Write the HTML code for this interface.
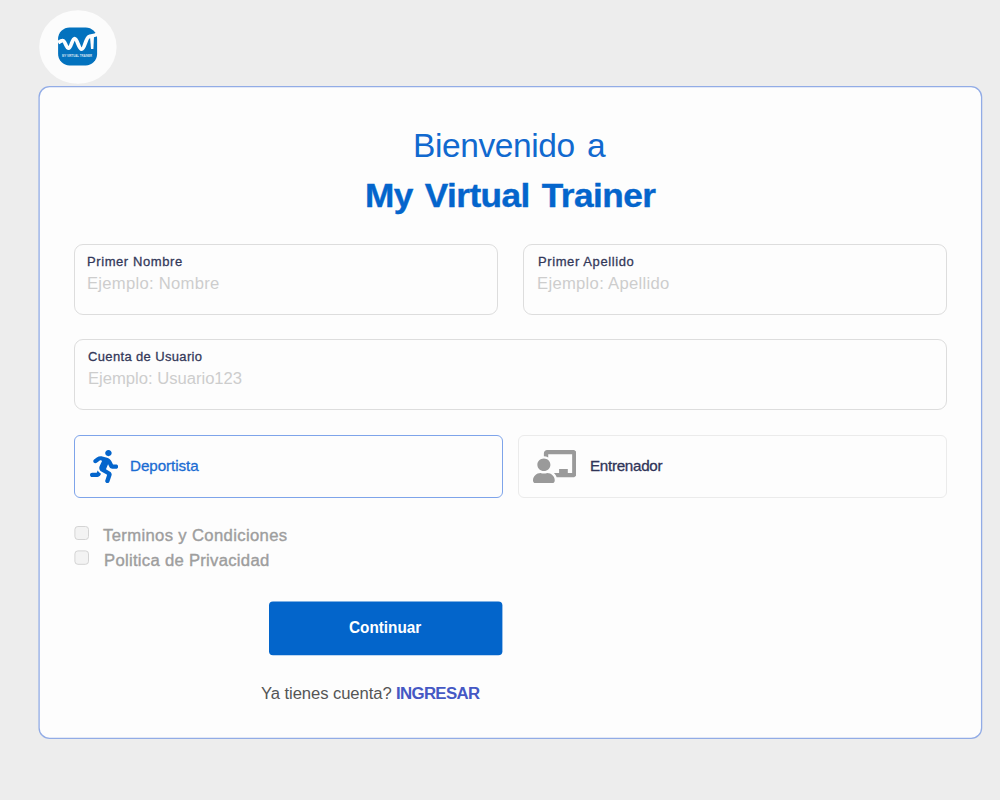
<!DOCTYPE html>
<html lang="es">
<head>
<meta charset="utf-8">
<title>My Virtual Trainer</title>
<style>
*{box-sizing:border-box;margin:0;padding:0}
html,body{width:1000px;height:800px;overflow:hidden}
body{background:#ededed;font-family:"Liberation Sans",sans-serif;position:relative}
.abs{position:absolute}
.t{white-space:nowrap;line-height:1}
.t span{display:inline-block;transform:scaleX(1.04);transform-origin:0 50%}
.t span#h1s{transform:none}
.t span#h2s{transform:scaleX(1.05)}
.t span#f2{transform:scaleX(1.05)}
.t span#bt{transform:scaleX(.94)}
#h1{top:129px;font-size:33.5px;font-weight:normal;word-spacing:3.5px;color:#1169cf}
#h2{top:179px;font-size:33.5px;font-weight:bold;word-spacing:2.5px;color:#0465cc;-webkit-text-stroke:.4px #0465cc}
.box{border:1px solid #dddddd;border-radius:9px;background:#fdfdfd}
.lbl{font-size:12.5px;-webkit-text-stroke:.27px #333859;color:#333859;letter-spacing:.4px}
.ph{font-size:16px;color:#cdcdcd;letter-spacing:.55px}
.role{font-size:14.6px;-webkit-text-stroke:.3px;letter-spacing:.4px}
.term{font-size:16px;-webkit-text-stroke:.38px #9e9e9e;color:#9e9e9e;letter-spacing:.4px}
</style>
</head>
<body>
<svg id="logo" class="abs" style="left:0;top:0;background:none;border-radius:0" width="140" height="90" viewBox="0 0 140 90">
<ellipse cx="77.9" cy="47" rx="38.7" ry="36.7" fill="#fcfcfc"/>
<rect x="58.1" y="27.5" width="39" height="37.9" rx="11.5" ry="11.5" fill="#0372be"/>
<path d="M58.2 42.6 C60 41.4 61.5 40.4 62.8 40.6 C65.2 40.6 66.2 48.2 68.6 48.2 C71.2 48.2 72 38.6 74.6 38.6 C77.4 38.6 78.6 49.2 81.6 49.2 C84.6 49.4 85.6 38.5 88.6 36.8 C91 35.5 94.5 36 97 34.2" fill="none" stroke="#fdfdfd" stroke-width="3.7" stroke-linecap="butt" stroke-linejoin="round"/>
<path d="M90 36.6 L94 36 L93.4 49 L91 49 Z" fill="#fdfdfd"/>
<text x="77.1" y="57.3" text-anchor="middle" font-family="Liberation Sans, sans-serif" font-weight="bold" font-size="2.6" fill="#fdfdfd" fill-opacity=".85" textLength="30" lengthAdjust="spacingAndGlyphs">MY VIRTUAL TRAINER</text>
</svg>
<svg id="card" class="abs" style="left:0;top:0" width="1000" height="800" viewBox="0 0 1000 800"><rect x="39.1" y="86.6" width="942.5" height="651.8" rx="10.5" ry="10.5" fill="#fdfdfd" stroke="#92ace6" stroke-width="1.3"/></svg>
<h1 id="h1" class="abs t" style="left:413.08px;letter-spacing:-0.42px"><span id="h1s">Bienvenido a</span></h1>
<h2 id="h2" class="abs t" style="left:365.30px;letter-spacing:-0.50px"><span id="h2s">My Virtual Trainer</span></h2>

<div id="b1" class="abs box" style="left:74px;top:244px;width:424px;height:71px"></div>
<div id="b2" class="abs box" style="left:523px;top:244px;width:424px;height:71px"></div>
<div id="b3" class="abs box" style="left:74px;top:339px;width:873px;height:71px"></div>
<label class="abs t lbl" style="left:87.44px;top:256px;letter-spacing:0.56px"><span id="l1">Primer Nombre</span></label>
<div class="abs t ph" style="left:87.00px;top:275.8px;letter-spacing:0.26px"><span id="p1">Ejemplo: Nombre</span></div>
<label class="abs t lbl" style="left:537.97px;top:256px;letter-spacing:0.57px"><span id="l2">Primer Apellido</span></label>
<div class="abs t ph" style="left:536.94px;top:275.8px;letter-spacing:0.28px"><span id="p2">Ejemplo: Apellido</span></div>
<label class="abs t lbl" style="left:87.98px;top:351px;letter-spacing:0.34px"><span id="l3">Cuenta de Usuario</span></label>
<div class="abs t ph" style="left:88.11px;top:370.8px;letter-spacing:-0.02px"><span id="p3">Ejemplo: Usuario123</span></div>

<div id="r1" class="abs" style="left:74px;top:435px;width:429px;height:63px;border:1px solid #7ea4ea;border-radius:6px;background:#fdfdfd"></div>
<div id="r2" class="abs" style="left:518px;top:435px;width:429px;height:63px;border:1px solid #ebebeb;border-radius:6px;background:#fdfdfd"></div>
<svg id="i1" class="abs" style="left:89.6px;top:449.7px" width="28.2" height="33.2" viewBox="0 0 416 512" preserveAspectRatio="none"><path fill="#0465cc" d="M272 96c26.51 0 48-21.49 48-48S298.51 0 272 0s-48 21.49-48 48 21.49 48 48 48zM113.69 317.47l-14.8 34.52H32c-17.67 0-32 14.33-32 32s14.33 32 32 32h77.45c19.25 0 36.58-11.44 44.11-29.09l8.79-20.52-10.67-6.3c-17.32-10.23-30.06-25.37-37.99-42.61zM384 223.99h-44.03l-26.06-53.25c-12.5-25.55-35.45-44.23-61.78-50.94l-71.08-21.14c-28.3-6.8-57.77-.55-80.84 17.14l-39.67 30.41c-14.03 10.75-16.69 30.83-5.92 44.86s30.84 16.66 44.86 5.92l39.69-30.41c7.67-5.89 17.44-8 25.27-6.14l14.7 4.37-37.46 87.39c-12.62 29.48-1.31 64.01 26.3 80.31l84.98 50.17-27.47 87.73c-5.28 16.86 4.11 34.81 20.97 40.09 3.19 1 6.41 1.48 9.58 1.48 13.61 0 26.23-8.77 30.52-22.45l31.64-101.06c5.91-20.77-2.89-43.08-21.64-54.39l-61.24-36.14 31.31-78.28 20.27 41.43c8 16.34 24.92 26.89 43.11 26.89H384c17.67 0 32-14.33 32-32s-14.33-32.01-32-32.01z"/></svg>
<svg id="i2" class="abs" style="left:532.8px;top:449.6px" width="43.5" height="33.6" viewBox="0 0 640 512" preserveAspectRatio="none"><path fill="#9a9a9a" d="M208 352c-2.390 0-4.780.350-7.060 1.090C187.980 357.300 174.350 360 160 360c-14.350 0-27.980-2.700-40.950-6.910-2.280-.740-4.660-1.090-7.050-1.090C49.940 352-.330 402.480 0 464.620.140 490.880 21.730 512 48 512h224c26.270 0 47.860-21.120 48-47.380.330-62.140-49.940-112.620-112-112.620zm-48-32c53.020 0 96-42.980 96-96s-42.980-96-96-96-96 42.980-96 96 42.980 96 96 96zM592 0H208c-26.470 0-48 22.250-48 49.590V96c23.420 0 45.100 6.780 64 17.800V64h352v288h-64v-64H384v64h-76.240c19.100 16.690 33.120 38.730 39.690 64H592c26.470 0 48-22.250 48-49.590V49.590C640 22.250 618.470 0 592 0z"/></svg>
<div class="abs t role" style="left:129.79px;top:458.6px;color:#1a6cd3;letter-spacing:-0.06px"><span id="rt1">Deportista</span></div>
<div class="abs t role" style="left:589.73px;top:458.6px;color:#2f3458;letter-spacing:-0.27px"><span id="rt2">Entrenador</span></div>

<svg id="chk" class="abs" style="left:0;top:0" width="200" height="600" viewBox="0 0 200 600"><rect x="74.9" y="526.5" width="13.6" height="13" rx="3" ry="3" fill="#f3f3f3" stroke="#d4d4d4" stroke-width="1"/><rect x="74.9" y="550.9" width="13.6" height="13.4" rx="3" ry="3" fill="#f3f3f3" stroke="#d4d4d4" stroke-width="1"/></svg>
<div class="abs t term" style="left:103.36px;top:528px;letter-spacing:0.34px"><span id="t1">Terminos y Condiciones</span></div>
<div class="abs t term" style="left:103.85px;top:552.6px;letter-spacing:0.28px"><span id="t2">Politica de Privacidad</span></div>

<svg id="btn" class="abs" style="left:0;top:0" width="600" height="700" viewBox="0 0 600 700"><rect x="269" y="601.4" width="233.4" height="53.8" rx="4" ry="4" fill="#0365cb"/></svg>
<div class="abs t" style="left:349.08px;top:619.2px;letter-spacing:-0.00px;font-size:16.3px;font-weight:bold;color:#fff"><span id="bt">Continuar</span></div>
<div class="abs t" style="left:260.86px;top:685.7px;font-size:16px;color:#555;letter-spacing:-0.08px"><span id="f1">Ya tienes cuenta?</span></div>
<div class="abs t" style="left:396.08px;top:685.7px;font-size:16px;color:#4558c4;font-weight:bold;letter-spacing:-0.63px"><span id="f2">INGRESAR</span></div>
</body>
</html>
